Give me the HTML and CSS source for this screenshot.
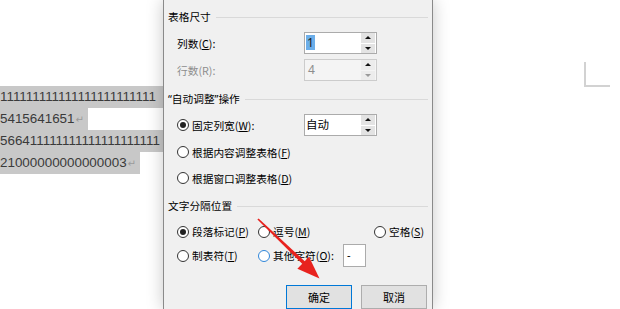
FILE: index.html
```html
<!DOCTYPE html>
<html lang="zh-CN">
<head>
<meta charset="utf-8">
<link rel="stylesheet" href="styles.css">
</head>
<body>
<div class="doc">
  <div class="lines">
    <div class="line"><span class="sel full">111111111111111111111111</span></div>
    <div class="line"><span class="sel">5415641651<span class="pm">↵</span></span></div>
    <div class="line"><span class="sel full">566411111111111111111111</span></div>
    <div class="line"><span class="sel">21000000000000003<span class="pm">↵</span></span></div>
  </div>
  <div class="corner"></div>
</div>

<div class="dialog">
  <div class="gtitle"><span>表格尺寸</span><i class="rule"></i></div>
  <div class="row mt8">
    <span class="label">列数(<u>C</u>):</span>
    <div class="spin">
      <div class="field"><span class="hl">1</span></div>
      <div class="btns"><span class="sb up"></span><span class="sb down"></span></div>
    </div>
  </div>
  <div class="row mt5">
    <span class="label dis">行数(R):</span>
    <div class="spin disabled">
      <div class="field">4</div>
      <div class="btns"><span class="sb up"></span><span class="sb down grey"></span></div>
    </div>
  </div>

  <div class="gtitle mt11"><span class="latinq">“自动调整”操作</span><i class="rule"></i></div>
  <div class="row mt8">
    <span class="label"><span class="radio on"></span>固定列宽(<u>W</u>):</span>
    <div class="spin">
      <div class="field">自动</div>
      <div class="btns"><span class="sb up"></span><span class="sb down"></span></div>
    </div>
  </div>
  <div class="row mt5">
    <span class="label wide"><span class="radio"></span>根据内容调整表格(<u>F</u>)</span>
  </div>
  <div class="row mt4">
    <span class="label wide"><span class="radio"></span>根据窗口调整表格(<u>D</u>)</span>
  </div>

  <div class="gtitle mt10"><span>文字分隔位置</span><i class="rule"></i></div>
  <div class="seprow mt7">
    <span class="opt"><span class="radio on"></span>段落标记(<u>P</u>)</span>
    <span class="opt"><span class="radio"></span>逗号(<u>M</u>)</span>
    <span class="opt"><span class="radio"></span>空格(<u>S</u>)</span>
  </div>
  <div class="seprow mt1">
    <span class="opt"><span class="radio"></span>制表符(<u>T</u>)</span>
    <span class="opt other"><span class="radio focus"></span>其他字符(<u>O</u>):<span class="charbox">-</span></span>
  </div>

  <div class="buttons">
    <span class="btn primary">确定</span>
    <span class="btn">取消</span>
  </div>
</div>

<svg class="arrow" width="620" height="309" viewBox="0 0 620 309">
  <polygon points="258.6,218.4 306.3,262.7 303.7,265.3 257.4,219.6" fill="#e8221e"/>
  <polygon points="319.5,278.5 297.4,268.8 309,256.8" fill="#e8221e"/>
</svg>
</body>
</html>
```

FILE: styles.css
```css
* { box-sizing: border-box; }

html, body {
  margin: 0;
  padding: 0;
}

body {
  width: 620px;
  height: 309px;
  overflow: hidden;
  background: #ffffff;
  position: relative;
  font-family: "Noto Sans CJK SC", "Noto Sans", sans-serif;
}

/* document behind */
.doc {
  width: 620px;
  height: 309px;
  padding-top: 86px;
}

.lines {
  width: 163px;
  overflow: hidden;
  font-family: "Liberation Sans", Arial, sans-serif;
  font-size: 13.4px;
  color: #3a3a3a;
}

.line {
  height: 22px;
  line-height: 22px;
  white-space: nowrap;
}

.sel {
  display: inline-block;
  background: #c8c8c8;
  padding-right: 4px;
}

.sel.full {
  display: block;
  padding-right: 0;
}

.pm {
  font-family: "DejaVu Sans", sans-serif;
  font-size: 10px;
  color: #9a9a9a;
  margin-left: 1px;
}

.corner {
  position: absolute;
  left: 584px;
  top: 62px;
  width: 26px;
  height: 25px;
  border-left: 2px solid #d2d2d2;
  border-bottom: 2px solid #d2d2d2;
}

/* dialog */
.dialog {
  position: absolute;
  left: 163px;
  top: 0;
  width: 270px;
  height: 309px;
  background: #f0f0f0;
  border-left: 1px solid #8a8a8a;
  border-right: 1px solid #8a8a8a;
  box-shadow: 0 0 16px rgba(0, 0, 0, 0.22);
  padding: 10px 5px 0 4px;
  font-size: 10.7px;
  color: #000;
  display: flex;
  flex-direction: column;
}

.gtitle {
  height: 14px;
  line-height: 14px;
  display: flex;
  align-items: center;
  white-space: nowrap;
}

.gtitle .rule {
  flex: 1;
  height: 1px;
  background: #d9d9d9;
  margin-left: 5px;
  margin-right: -1px;
}

.latinq {
  font-family: "Noto Sans", "Noto Sans CJK SC", sans-serif;
}

.mt1 { margin-top: 1px; }
.mt4 { margin-top: 4px; }
.mt5 { margin-top: 5px; }
.mt7 { margin-top: 7px; }
.mt8 { margin-top: 8px; }
.mt10 { margin-top: 10px; }
.mt11 { margin-top: 11px; }

.row {
  height: 22px;
  display: flex;
  align-items: center;
  padding-left: 9px;
}

.label {
  width: 127px;
  display: flex;
  align-items: center;
  white-space: nowrap;
}

.label.wide { width: auto; }

.label.dis { color: #8d8d8d; }

u { text-decoration: underline; text-underline-offset: 1px; }

.radio {
  width: 12px;
  height: 12px;
  border: 1px solid #333333;
  border-radius: 50%;
  background: #ffffff;
  margin-right: 3px;
  flex: none;
  display: inline-flex;
  align-items: center;
  justify-content: center;
}

.radio.on::after {
  content: "";
  width: 6px;
  height: 6px;
  border-radius: 50%;
  background: #222222;
}

.radio.focus { border-color: #2f86d9; }

/* spin box */
.spin {
  width: 73px;
  height: 22px;
  border: 1px solid #ababab;
  background: #ffffff;
  display: flex;
}

.spin .field {
  flex: 1;
  padding-left: 1px;
  line-height: 19px;
  font-size: 11.5px;
}

.hl {
  display: inline-block;
  background: #6caee9;
  color: #1c1c1c;
  padding: 0 1px;
  line-height: 15px;
  margin-top: 2px;
  font-family: "Noto Sans", sans-serif;
  font-size: 12px;
}

.spin.disabled {
  border-color: #cccccc;
  background: #f4f4f4;
  color: #8d8d8d;
}

.spin.disabled .field {
  font-family: "Noto Sans", sans-serif;
  font-size: 12px;
  padding-left: 3px;
}

.btns {
  width: 15px;
  display: flex;
  flex-direction: column;
  gap: 1px;
  padding: 0 1px 0 0;
}

.sb {
  flex: 1;
  background: #e3e3e3;
  display: flex;
  align-items: center;
  justify-content: center;
}

.sb.up::after {
  content: "";
  border-left: 3px solid transparent;
  border-right: 3px solid transparent;
  border-bottom: 3px solid #111;
}

.sb.down::after {
  content: "";
  border-left: 3px solid transparent;
  border-right: 3px solid transparent;
  border-top: 3px solid #111;
}

.sb.down.grey::after { border-top-color: #9a9a9a; }

.spin.disabled .sb { background: #ececec; }

/* separator options */
.seprow {
  height: 23px;
  display: grid;
  grid-template-columns: 81px 116px auto;
  align-items: center;
  padding-left: 9px;
}

.opt {
  display: flex;
  align-items: center;
  white-space: nowrap;
}

.opt.other { grid-column: 2 / 4; }

.charbox {
  width: 23px;
  height: 23px;
  background: #ffffff;
  border: 1px solid #ababab;
  margin-left: 9px;
  padding-left: 3px;
  line-height: 20px;
  font-family: "Noto Sans", sans-serif;
  font-size: 11px;
}

/* buttons */
.buttons {
  margin-top: 18px;
  display: flex;
  justify-content: flex-end;
  gap: 9px;
}

.btn {
  width: 66px;
  height: 24px;
  background: #e1e1e1;
  border: 1px solid #adadad;
  display: flex;
  align-items: center;
  justify-content: center;
  font-size: 11px;
}

.btn.primary { border-color: #0078d7; }

.arrow {
  position: absolute;
  left: 0;
  top: 0;
  pointer-events: none;
}
```
